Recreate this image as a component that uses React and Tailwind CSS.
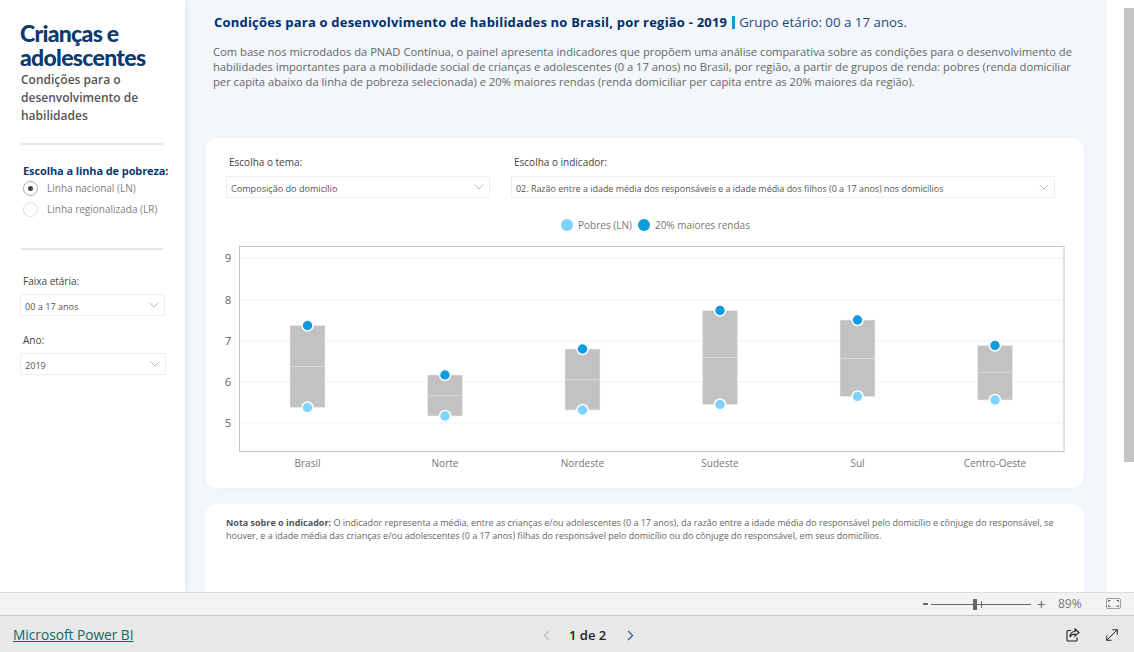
// App.jsx - Painel Crianças e adolescentes (Power BI embed)
import React from 'react';
import { ChevronDown, ChevronLeft, ChevronRight, MoveDiagonal } from 'lucide-react';

const REGIONS = [
  { name: 'Brasil', x: 307.5, top: 325.5, mid: 366.5, bottom: 407.5 },
  { name: 'Norte', x: 445, top: 375, mid: 395.5, bottom: 416 },
  { name: 'Nordeste', x: 582.5, top: 349, mid: 379.5, bottom: 410 },
  { name: 'Sudeste', x: 720, top: 310.5, mid: 357.5, bottom: 404.5 },
  { name: 'Sul', x: 857.5, top: 320, mid: 358.5, bottom: 396.5 },
  { name: 'Centro-Oeste', x: 995, top: 345.5, mid: 372.5, bottom: 400 },
];

const TICKS = [
  { label: '9', y: 258 },
  { label: '8', y: 300 },
  { label: '7', y: 341 },
  { label: '6', y: 382 },
  { label: '5', y: 423 },
];

const Select = ({ value, className, textClass = 'text-[9.1px]' }) => (
  <div className={`flex items-center justify-between bg-white border border-[#eeeeee] pl-[4px] pr-[2px] ${className}`}>
    <span className={`${textClass} text-[#555555] whitespace-nowrap pt-[3px]`}>{value}</span>
    <ChevronDown size={16} strokeWidth={1} className="text-[#999999] shrink-0" />
  </div>
);

const Radio = ({ label, checked }) => (
  <div className="flex items-center h-[21px]">
    <div className={`w-[15px] h-[15px] rounded-full border flex items-center justify-center ${checked ? 'border-[#aaaaaa]' : 'border-[#dddddd]'}`}>
      {checked && <div className="w-[5px] h-[5px] rounded-full bg-[#444444]"></div>}
    </div>
    <span className="ml-[9px] text-[10px] text-[#808080] whitespace-nowrap">{label}</span>
  </div>
);

const Chart = () => (
  <svg width="879" height="250" viewBox="205 238 879 250" className="block">
    <g style={{ fontFamily: '"Open Sans", sans-serif' }}>
      {TICKS.map((t) => (
        <g key={t.label}>
          <line x1="240" x2="1063" y1={t.y} y2={t.y} stroke="#f0f0f0" strokeWidth="1" />
          <text x="228" y={t.y + 4} textAnchor="middle" fontSize="11.5" fill="#666666">{t.label}</text>
        </g>
      ))}
      <rect x="239.5" y="246.5" width="824.5" height="205" fill="none" stroke="#c4c4c4" strokeWidth="1" />
      {REGIONS.map((r) => (
        <g key={r.name}>
          <rect x={r.x - 17.5} y={r.top} width="35" height={r.bottom - r.top} fill="#c2c2c2" stroke="#f0f0f0" strokeWidth="0.5" />
          <line x1={r.x - 17.5} x2={r.x + 17.5} y1={r.mid} y2={r.mid} stroke="#d8d8d8" strokeWidth="1" />
          <circle cx={r.x} cy={r.top} r="5.5" fill="#0f9bdc" stroke="#ffffff" strokeWidth="1.5" />
          <circle cx={r.x} cy={r.bottom} r="5.5" fill="#7fd3ff" stroke="#ffffff" strokeWidth="1.5" />
          <text x={r.x} y="467" textAnchor="middle" fontSize="10" fill="#777777">{r.name}</text>
        </g>
      ))}
    </g>
  </svg>
);

const Sidebar = () => (
  <aside className="w-[185px] shrink-0 bg-white shadow-[2px_0_5px_rgba(0,0,0,0.07)] z-10 pl-[21px] pt-[21px]">
    <h1 className="text-[23px] leading-[24px] font-black -ml-[1px] text-[#0b3a6f] tracking-[-0.7px]" style={{ fontFamily: 'Lato, sans-serif' }}>
      Crianças e<br />adolescentes
    </h1>
    <p className="text-[12px] leading-[18px] font-semibold text-[#555555] mt-[2px]">
      Condições para o<br />desenvolvimento de<br />habilidades
    </p>
    <div className="w-[142px] h-[2px] bg-[#e6e6e6] mt-[18px]"></div>

    <p className="text-[11px] font-bold text-[#0b3a6f] mt-[18px] ml-[2px] leading-[15px] whitespace-nowrap tracking-[-0.1px]">Escolha a linha de pobreza:</p>
    <div className="ml-[2px]">
      <Radio label="Linha nacional (LN)" checked />
      <Radio label="Linha regionalizada (LR)" />
    </div>
    <div className="w-[142px] h-[2px] bg-[#e6e6e6] mt-[28px]"></div>

    <p className="text-[10px] text-[#444444] mt-[24px] ml-[2px] leading-[15px]">Faixa etária:</p>
    <Select value="00 a 17 anos" className="w-[145px] h-[22px] -ml-[1px] mt-[5px]" />
    <p className="text-[10px] text-[#444444] mt-[17px] ml-[2px] leading-[15px]">Ano:</p>
    <Select value="2019" className="w-[146px] h-[22px] -ml-[1px] mt-[5px]" />
  </aside>
);

const Header = () => (
  <header className="pl-[9px] pt-[12px] h-[138px]">
    <h2 className="flex items-center text-[13px] leading-[20px] font-bold text-[#002f6c] whitespace-nowrap tracking-[0.2px]">
      Condições para o desenvolvimento de habilidades no Brasil, por região - 2019
      <span className="ml-[5px] w-[3px] h-[13px] bg-[#0f9bdc]"></span>
      <span className="ml-[4px] text-[13.3px] font-normal text-[#1f4a7a] tracking-normal">Grupo etário: 00 a 17 anos.</span>
    </h2>
    <p className="text-[11.2px] leading-[15.2px] text-[#666666] mt-[12px] w-[870px] -ml-[1px]">
      Com base nos microdados da PNAD Contínua, o painel apresenta indicadores que propõem uma análise comparativa sobre as condições para o desenvolvimento de
      habilidades importantes para a mobilidade social de crianças e adolescentes (0 a 17 anos) no Brasil, por região, a partir de grupos de renda: pobres (renda domiciliar
      per capita abaixo da linha de pobreza selecionada) e 20% maiores rendas (renda domiciliar per capita entre as 20% maiores da região).
    </p>
  </header>
);

const ChartCard = () => (
  <section className="w-[879px] h-[350px] bg-white rounded-xl shadow-[0_0_4px_rgba(0,0,0,0.03)]">
    <div className="flex pt-[17px] pl-[21px]">
      <div className="w-[264px]">
        <p className="text-[10px] text-[#444444] leading-[15px] pl-[3px]">Escolha o tema:</p>
        <Select value="Composição do domicílio" className="h-[22px] mt-[6px]" />
      </div>
      <div className="w-[544px] ml-[21px]">
        <p className="text-[10px] text-[#444444] leading-[15px] pl-[3px]">Escolha o indicador:</p>
        <Select value="02. Razão entre a idade média dos responsáveis e a idade média dos filhos (0 a 17 anos) nos domicílios" className="h-[22px] mt-[6px]" textClass="text-[8.95px]" />
      </div>
    </div>
    <div className="flex items-center justify-center h-[20px] mt-[17px] text-[10px] text-[#777777] pl-[22px]">
      <span className="w-[12px] h-[12px] rounded-full bg-[#7fd3ff]"></span>
      <span className="ml-[5px]">Pobres (LN)</span>
      <span className="w-[12px] h-[12px] rounded-full bg-[#0f9bdc] ml-[6px]"></span>
      <span className="ml-[5px]">20% maiores rendas</span>
    </div>
    <div className="mt-[3px]">
      <Chart />
    </div>
  </section>
);

const NoteCard = () => (
  <section className="w-[879px] h-[200px] mt-[16px] bg-white rounded-xl pl-[21px] pt-[12px]">
    <p className="text-[9px] leading-[13.3px] text-[#666666] whitespace-nowrap">
      <b className="text-[#555555]">Nota sobre o indicador:</b> O indicador representa a média, entre as crianças e/ou adolescentes (0 a 17 anos), da razão entre a idade média do responsável pelo domicílio e cônjuge do responsável, se<br />
      houver, e a idade média das crianças e/ou adolescentes (0 a 17 anos) filhas do responsável pelo domicílio ou do cônjuge do responsável, em seus domicílios.
    </p>
  </section>
);

const ZoomBar = () => (
  <div className="h-[23px] shrink-0 bg-[#f3f3f3] border-t border-[#dedede] flex items-center justify-end text-[#666666]">
    <span className="w-[5px] h-[2px] bg-[#666666] mr-[3px]"></span>
    <div className="relative w-[100px] h-[1px] bg-[#666666]">
      <span className="absolute left-[42px] -top-[5px] w-[4px] h-[11px] bg-[#666666]"></span>
      <span className="absolute left-[50px] -top-[3px] w-[1px] h-[7px] bg-[#666666]"></span>
    </div>
    <span className="ml-[6px] text-[15px] leading-none w-[8px]">+</span>
    <span className="ml-[13px] text-[12px] w-[24px] text-[#777777]">89%</span>
    <svg width="15" height="12" viewBox="0 0 15 12" fill="none" className="ml-[24px] mr-[13px]" stroke="#666666">
      <rect x="0.5" y="0.5" width="14" height="10" rx="1.5" strokeOpacity="0.6" />
      <path d="M2.5 4V2.500H4.500M10.500 2.500H12.500V4M12.500 7V8.500H10.500M4.500 8.500H2.500V7" />
    </svg>
  </div>
);

const Footer = () => (
  <footer className="h-[37px] shrink-0 bg-[#e8e8e8] border-t border-[#c8c8c8] relative flex items-center justify-between pl-[13px] pr-[13px] pt-[2px]">
    <a href="#" className="text-[13.7px] text-[#0b6a5e] underline whitespace-nowrap pt-[1px]">Microsoft Power BI</a>
    <div className="absolute left-[538px] top-[10px] flex items-center">
      <ChevronLeft size={17} strokeWidth={1.5} className="text-[#bbbbbb]" />
      <span className="ml-[14px] text-[13px] font-semibold text-[#222222] whitespace-nowrap w-[40px]">1 de 2</span>
      <ChevronRight size={17} strokeWidth={1.5} className="ml-[13px] text-[#2a5a8a]" />
    </div>
    <div className="flex items-center">
      <svg width="14" height="14" viewBox="0 0 14 14" fill="none" stroke="#222222" strokeWidth="1.1">
        <path d="M5 2.500H2a1 1 0 0 0-1 1V12a1 1 0 0 0 1 1h8a1 1 0 0 0 1-1V9.500" />
        <path d="M9 1l4 3.500L9 8V6C6.500 6 5 7 4 9c0-3 1.500-5.500 5-5.500z" />
      </svg>
      <MoveDiagonal size={18} strokeWidth={1.3} className="ml-[23px] text-[#222222]" />
    </div>
  </footer>
);

export default function App() {
  return (
    <div className="w-[1134px] h-[652px] flex flex-col overflow-hidden bg-white" style={{ fontFamily: '"Open Sans", "Noto Sans", sans-serif' }}>
      <div className="flex-1 flex min-h-0 overflow-hidden">
        <Sidebar />
        <main className="w-[922px] shrink-0 bg-[#f3f6fa] pl-[20px] overflow-hidden">
          <Header />
          <ChartCard />
          <NoteCard />
        </main>
        <div className="w-[17px] shrink-0"></div>
        <div className="w-[10px] shrink-0 pt-[8px]">
          <div className="h-[454px] bg-[#c4c4c4]"></div>
        </div>
      </div>
      <ZoomBar />
      <Footer />
    </div>
  );
}
